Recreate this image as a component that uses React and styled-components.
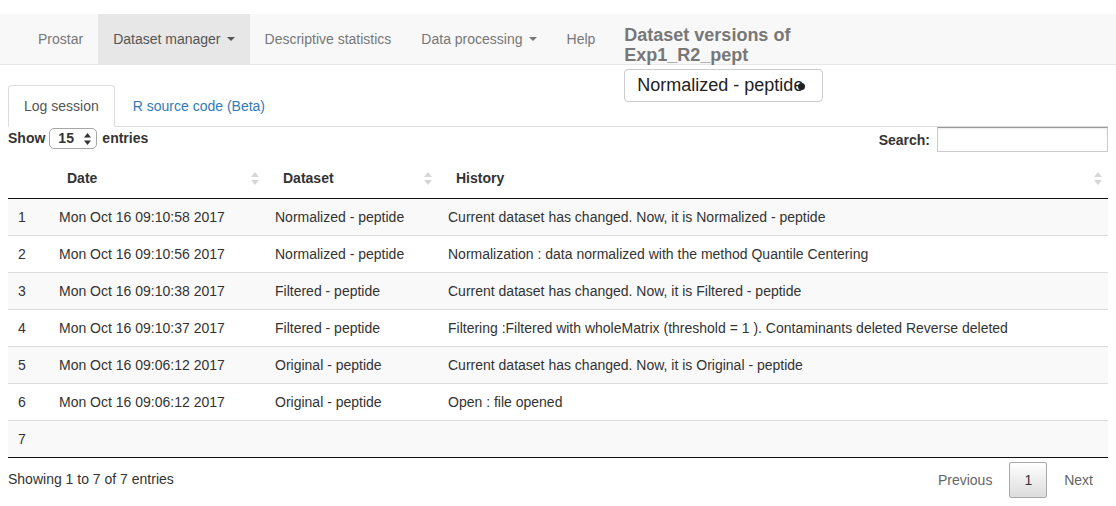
import React from "react";
import styled, { createGlobalStyle } from "styled-components";

const Global = createGlobalStyle`
  html, body { margin: 0; padding: 0; background: #fff; }
  body {
    font-family: "Liberation Sans", Arial, Helvetica, sans-serif;
    font-size: 14px;
    line-height: 20px;
    color: #333;
  }
  * { box-sizing: border-box; }
`;

const Navbar = styled.nav`
  margin-top: 14px;
  height: 51px;
  background: #f8f8f8;
  border-bottom: 1px solid #e7e7e7;
  display: flex;
  align-items: flex-start;
  padding-left: 23px;
  margin-bottom: 20px;
  overflow: visible;
`;

const NavItem = styled.div`
  padding: 15px;
  line-height: 20px;
  color: ${(p) => (p.$active ? "#555" : "#777")};
  background: ${(p) => (p.$active ? "#e7e7e7" : "transparent")};
  white-space: nowrap;
  display: flex;
  align-items: center;
`;

const Caret = styled.span`
  display: inline-block;
  width: 0;
  height: 0;
  margin-left: 6px;
  border-top: 4px solid currentColor;
  border-left: 4px solid transparent;
  border-right: 4px solid transparent;
`;

const VersionBlock = styled.div`
  margin-left: 14px;
  display: flex;
  flex-direction: column;
  position: relative;
  z-index: 2;
`;

const VersionTitle = styled.h4`
  margin: 12px 0 3px;
  font-size: 18px;
  font-weight: bold;
  line-height: 19.8px;
  color: #777;
  width: 190px;
`;

const VersionSelect = styled.div`
  position: relative;
  width: 199px;
  height: 33px;
  border: 1px solid #ccc;
  border-radius: 4px;
  background: #fff;
  font-size: 18px;
  color: #222;
  padding: 0 12px;
  display: flex;
  align-items: center;
`;

const SelectDot = styled.span`
  position: absolute;
  left: 173px;
  top: 13px;
  width: 7px;
  height: 7px;
  border-radius: 50%;
  background: #222;
`;

const Content = styled.div`
  padding: 0 8px;
`;

const Tabs = styled.div`
  display: flex;
  border-bottom: 1px solid #ddd;
`;

const Tab = styled.div`
  padding: 10px 15px;
  line-height: 20px;
  margin-right: 2px;
  margin-bottom: -1px;
  border: 1px solid ${(p) => (p.$active ? "#ddd" : "transparent")};
  border-bottom-color: ${(p) => (p.$active ? "#fff" : "transparent")};
  border-radius: 4px 4px 0 0;
  background: ${(p) => (p.$active ? "#fff" : "transparent")};
  color: ${(p) => (p.$active ? "#555" : "#337ab7")};
`;

const Controls = styled.div`
  display: flex;
  justify-content: space-between;
  align-items: flex-start;
`;

const LengthLabel = styled.div`
  display: flex;
  align-items: center;
  gap: 4px;
  font-weight: bold;
  margin-top: 1px;
  line-height: 21px;
`;

const MiniSelect = styled.div`
  width: 48px;
  height: 21px;
  border: 1px solid #a6a6a6;
  border-radius: 5px;
  background: #fff;
  display: flex;
  align-items: center;
  justify-content: space-between;
  padding: 0 5px 0 8px;
  margin-right: 1px;
  font-weight: bold;
`;

const SearchLabel = styled.div`
  display: flex;
  align-items: center;
  font-weight: bold;
  gap: 7px;
`;

const SearchInput = styled.div`
  width: 171px;
  height: 25px;
  border: 1px solid #ccc;
  border-top-color: #9a9a9a;
  box-shadow: inset 0 1px 2px rgba(0, 0, 0, 0.08);
  background: #fff;
`;

const Table = styled.table`
  width: 100%;
  margin-top: 6px;
  border-collapse: separate;
  border-spacing: 0;
  table-layout: fixed;
  border-bottom: 1px solid #111;
`;

const Th = styled.th`
  text-align: left;
  font-weight: bold;
  padding: 10px 6px 10px 18px;
  line-height: 20px;
  border-bottom: 1px solid #111;
`;

const ThInner = styled.div`
  display: flex;
  align-items: center;
  justify-content: space-between;
`;

const Tr = styled.tr`
  background: ${(p) => (p.$odd ? "#f9f9f9" : "#fff")};
`;

const Td = styled.td`
  padding: 8px 10px;
  line-height: 20px;
  border-top: ${(p) => (p.$first ? "none" : "1px solid #ddd")};
  white-space: nowrap;
`;

const Footer = styled.div`
  display: flex;
  justify-content: space-between;
  align-items: flex-start;
`;

const Info = styled.div`
  padding-top: 10.5px;
`;

const Pagination = styled.div`
  display: flex;
  padding-top: 3.5px;
`;

const PageButton = styled.div`
  padding: 7px 14px;
  margin-left: 2px;
  line-height: 20px;
  border: 1px solid ${(p) => (p.$current ? "#a9a9a9" : "transparent")};
  border-radius: 2px;
  color: ${(p) => (p.$current ? "#333" : "#666")};
  background: ${(p) =>
    p.$current ? "linear-gradient(to bottom, #fff 0%, #dcdcdc 100%)" : "transparent"};
`;

const SortIcon = () => (
  <svg width="8" height="13" viewBox="0 0 8 13">
    <polygon points="4,0 8,5 0,5" fill="#d6d6d6" />
    <polygon points="0,8 8,8 4,13" fill="#d6d6d6" />
  </svg>
);

const UpDown = () => (
  <svg width="7" height="12" viewBox="0 0 7 12">
    <polygon points="3.5,0 7,4.5 0,4.5" fill="#333" />
    <polygon points="0,7.5 7,7.5 3.5,12" fill="#333" />
  </svg>
);

const rows = [
  ["1", "Mon Oct 16 09:10:58 2017", "Normalized - peptide", "Current dataset has changed. Now, it is Normalized - peptide"],
  ["2", "Mon Oct 16 09:10:56 2017", "Normalized - peptide", "Normalization : data normalized with the method Quantile Centering"],
  ["3", "Mon Oct 16 09:10:38 2017", "Filtered - peptide", "Current dataset has changed. Now, it is Filtered - peptide"],
  ["4", "Mon Oct 16 09:10:37 2017", "Filtered - peptide", "Filtering :Filtered with wholeMatrix (threshold = 1 ). Contaminants deleted Reverse deleted"],
  ["5", "Mon Oct 16 09:06:12 2017", "Original - peptide", "Current dataset has changed. Now, it is Original - peptide"],
  ["6", "Mon Oct 16 09:06:12 2017", "Original - peptide", "Open : file opened"],
  ["7", "", "", ""],
];

export default function App() {
  return (
    <>
      <Global />
      <Navbar>
        <NavItem>Prostar</NavItem>
        <NavItem $active>
          Dataset manager <Caret />
        </NavItem>
        <NavItem>Descriptive statistics</NavItem>
        <NavItem>
          Data processing <Caret />
        </NavItem>
        <NavItem>Help</NavItem>
        <VersionBlock>
          <VersionTitle>Dataset versions of Exp1_R2_pept</VersionTitle>
          <VersionSelect>
            Normalized - peptide
            <SelectDot />
          </VersionSelect>
        </VersionBlock>
      </Navbar>
      <Content>
        <Tabs>
          <Tab $active>Log session</Tab>
          <Tab>R source code (Beta)</Tab>
        </Tabs>
        <Controls>
          <LengthLabel>
            Show
            <MiniSelect>
              15
              <UpDown />
            </MiniSelect>
            entries
          </LengthLabel>
          <SearchLabel>
            Search:
            <SearchInput />
          </SearchLabel>
        </Controls>
        <Table>
          <colgroup>
            <col style={{ width: 41 }} />
            <col style={{ width: 216 }} />
            <col style={{ width: 173 }} />
            <col />
          </colgroup>
          <thead>
            <tr>
              <Th />
              <Th>
                <ThInner>
                  Date <SortIcon />
                </ThInner>
              </Th>
              <Th>
                <ThInner>
                  Dataset <SortIcon />
                </ThInner>
              </Th>
              <Th>
                <ThInner>
                  History <SortIcon />
                </ThInner>
              </Th>
            </tr>
          </thead>
          <tbody>
            {rows.map((r, i) => (
              <Tr key={i} $odd={i % 2 === 0}>
                {r.map((c, j) => (
                  <Td key={j} $first={i === 0}>
                    {c}
                  </Td>
                ))}
              </Tr>
            ))}
          </tbody>
        </Table>
        <Footer>
          <Info>Showing 1 to 7 of 7 entries</Info>
          <Pagination>
            <PageButton>Previous</PageButton>
            <PageButton $current>1</PageButton>
            <PageButton>Next</PageButton>
          </Pagination>
        </Footer>
      </Content>
    </>
  );
}
